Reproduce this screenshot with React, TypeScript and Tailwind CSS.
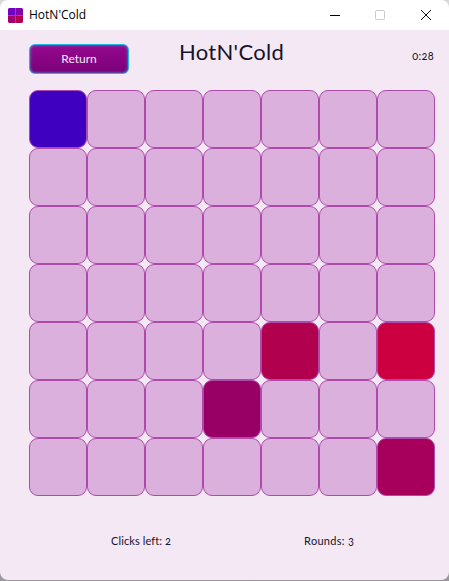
import { useMemo } from "react";

const HOT_CELLS: Record<string, string> = {
  "0-0": "bg-[#4000c0]",
  "4-4": "bg-[#b0004e]",
  "4-6": "bg-[#cc0040]",
  "5-3": "bg-[#990066]",
  "6-6": "bg-[#a6005c]",
};

function AppIcon() {
  return (
    <div className="grid h-[15px] w-[15px] grid-cols-2 grid-rows-2 gap-px overflow-hidden rounded-[2px] bg-[#a040a0]">
      <span className="bg-[#7400c8]" />
      <span className="bg-[#8400a8]" />
      <span className="bg-[#a00070]" />
      <span className="bg-[#b0004e]" />
    </div>
  );
}

function TitleBar() {
  return (
    <div className="flex h-[30px] items-center rounded-t-lg bg-white pl-2">
      <AppIcon />
      <span className="ml-[6px] text-xs text-black font-['Segoe_UI','Open_Sans',sans-serif]">HotN'Cold</span>
      <div className="ml-auto flex items-center">
        <svg viewBox="0 0 10 10" className="mr-[35px] h-2.5 w-2.5" aria-hidden="true">
          <path d="M0 5.5h10" stroke="#000" strokeWidth="1" fill="none" />
        </svg>
        <svg viewBox="0 0 10 10" className="mr-[36px] h-2.5 w-2.5" aria-hidden="true">
          <rect x="0.5" y="0.5" width="9" height="9" rx="1" stroke="#ccc" fill="none" />
        </svg>
        <svg viewBox="0 0 10 10" className="mr-[18px] h-2.5 w-2.5" aria-hidden="true">
          <path d="M0 0l10 10M10 0 0 10" stroke="#111" strokeWidth="1" fill="none" />
        </svg>
      </div>
    </div>
  );
}

export default function App() {
  const cells = useMemo(() => Array.from({ length: 7 }, (_, row) => Array.from({ length: 7 }, (_, col) => `${row}-${col}`)), []);

  return (
    <div className="h-[581px] w-[449px] overflow-hidden bg-gradient-to-b from-[#d8d8d8] to-[#989898] font-['Lato',sans-serif]">
      <div className="flex h-[580px] flex-col">
        <TitleBar />
        <div className="flex flex-1 flex-col rounded-b-lg bg-[#f5e8f5] pl-[29px] pr-[14px]">
          <div className="mt-[14px] flex h-[46px] items-start">
            <button className="h-[30px] w-[100px] rounded-[6px] border border-[#22b4e4] bg-gradient-to-b from-[#960a90] to-[#7a0078] text-xs text-[#f8e8f8] shadow-[inset_0_0_3px_#30a0d8]">
              Return
            </button>
            <h1 className="ml-[50px] mt-[-7px] text-[22px] leading-[30px] tracking-[0.3px] text-[#14142a]">HotN'Cold</h1>
            <span className="ml-auto mr-px mt-[4px] text-[11px] leading-4 tracking-[0.3px] text-[#14142a] [font-variant-numeric:oldstyle-nums]">0:28</span>
          </div>
          <div className="grid grid-cols-[repeat(7,58px)] grid-rows-[repeat(7,58px)]">
            {cells.flat().map((id) => (
              <div
                key={id}
                className={`rounded-[9px] border border-[#ae4aac] ${HOT_CELLS[id] ?? "bg-[#dcb0dc]"}`}
              />
            ))}
          </div>
          <div className="mt-[37px] flex text-[11px] leading-4 text-[#14142a] [font-variant-numeric:oldstyle-nums]">
            <span className="ml-[82px] tracking-[0.1px]">Clicks left: 2</span>
            <span className="ml-[133px] tracking-[0.3px]">Rounds: 3</span>
          </div>
        </div>
      </div>
    </div>
  );
}
